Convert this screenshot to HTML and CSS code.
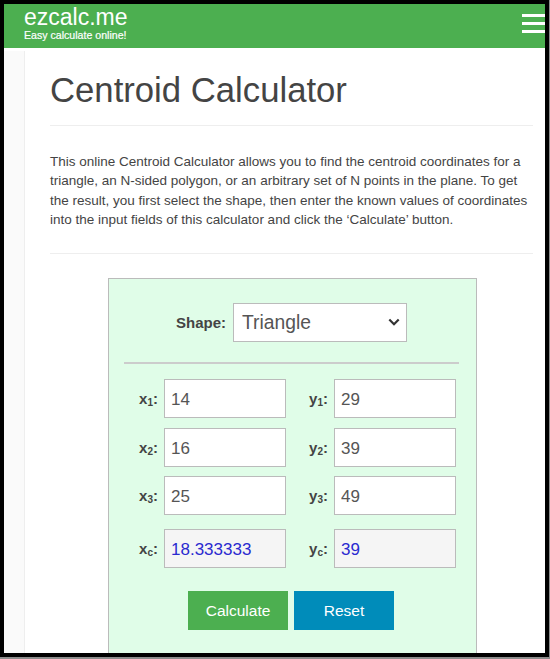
FILE: index.html
```html
<!DOCTYPE html>
<html lang="en">
<head>
<meta charset="utf-8">
<title>Centroid Calculator</title>
<link rel="stylesheet" href="styles.css">
</head>
<body>
<div class="frame">
  <header class="topbar">
    <div class="brand">
      <div class="brand-name">ezcalc.me</div>
      <div class="brand-tag">Easy calculate online!</div>
    </div>
    <div class="burger"><span></span><span></span><span></span></div>
  </header>
  <div class="body">
    <aside class="rail"></aside>
    <main class="main">
      <h1 class="title">Centroid Calculator</h1>
      <hr class="rule">
      <p class="intro">This online Centroid Calculator allows you to find the centroid coordinates for a triangle, an N-sided polygon, or an arbitrary set of N points in the plane. To get the result, you first select the shape, then enter the known values of coordinates into the input fields of this calculator and click the ‘Calculate’ button.</p>
      <hr class="rule rule-low">
      <form class="calc">
        <div class="shape-row">
          <label class="shape-label" for="shape">Shape:</label>
          <div class="select-wrap">
            <select class="shape-select" id="shape"><option>Triangle</option></select>
            <svg class="chevron" width="12" height="8" viewBox="0 0 12 8" aria-hidden="true"><path d="M1.3 1.5 6 6.2 10.7 1.5" fill="none" stroke="#333" stroke-width="2.2"/></svg>
          </div>
        </div>
        <hr class="calc-rule">
        <div class="fields">
          <label class="lab">x<sub>1</sub>:</label><input class="field" value="14">
          <label class="lab">y<sub>1</sub>:</label><input class="field" value="29">
          <label class="lab">x<sub>2</sub>:</label><input class="field" value="16">
          <label class="lab">y<sub>2</sub>:</label><input class="field" value="39">
          <label class="lab">x<sub>3</sub>:</label><input class="field" value="25">
          <label class="lab">y<sub>3</sub>:</label><input class="field" value="49">
        </div>
        <div class="fields results">
          <label class="lab">x<sub>c</sub>:</label><input class="field result" value="18.333333" readonly>
          <label class="lab">y<sub>c</sub>:</label><input class="field result" value="39" readonly>
        </div>
        <div class="actions">
          <button class="btn btn-green" type="button">Calculate</button>
          <button class="btn btn-blue" type="button">Reset</button>
        </div>
      </form>
    </main>
  </div>
</div>
</body>
</html>
```
FILE: styles.css
```css
* { box-sizing: border-box; }
html, body { margin: 0; padding: 0; }
body {
  width: 550px;
  height: 659px;
  overflow: hidden;
  background: #8c8c8c;
  font-family: "Liberation Sans", Arial, sans-serif;
  color: #444;
}
.frame {
  width: 549px;
  height: 657px;
  border: 4px solid #000;
  background: #fff;
  overflow: hidden;
  display: flex;
  flex-direction: column;
}
.topbar {
  flex: none;
  height: 44px;
  background: #4caf50;
  display: flex;
  justify-content: space-between;
  padding-left: 20px;
  color: #fff;
}
.brand-name { font-size: 23px; line-height: 24px; margin-top: 1px; }
.brand-tag { font-size: 10.6px; line-height: 12px; -webkit-text-stroke: 0.2px #fff; }
.burger {
  width: 23px;
  padding-top: 10px;
  display: flex;
  flex-direction: column;
  gap: 5px;
}
.burger span { display: block; height: 3px; background: #fff; }
.body { flex: 1; display: flex; min-height: 0; }
.rail { flex: none; width: 21px; margin-top: 3px; background: #fafafa; border-right: 1px solid #eee; }
.main { flex: 1; padding: 0 12px 0 25px; min-width: 0; }
.title {
  margin: 22px 0 0;
  font-size: 34.7px;
  line-height: 41px;
  font-weight: 400;
  color: #444;
}
.rule { border: 0; border-top: 1px solid #eee; margin: 14px 0 0; }
.intro {
  margin: 26px 0 0;
  font-size: 13.5px;
  line-height: 19.3px;
  color: #444;
}
.rule-low { margin-top: 24px; }
.calc {
  width: 369px;
  margin: 24px 0 0 58px;
  height: 400px;
  background: #e0fde8;
  border: 1px solid #bbb;
  padding: 24px 17px 0 15px;
}
.shape-row { display: flex; justify-content: center; align-items: center; gap: 7px; }
.shape-label { font-size: 15px; font-weight: 700; color: #444; }
.select-wrap { position: relative; display: flex; }
.shape-select {
  appearance: none;
  width: 174px;
  height: 39px;
  background: #fff;
  border: 1px solid #bbb;
  border-radius: 0;
  font-family: inherit;
  font-size: 19.3px;
  color: #555;
  padding-left: 8px;
}
.chevron { position: absolute; right: 7px; top: 15px; pointer-events: none; }
.calc-rule { border: 0; border-top: 2px solid #ccc; margin: 20px 0 0; }
.fields {
  display: grid;
  grid-template-columns: 40px 122px 48px 122px;
  row-gap: 9.5px;
  align-items: center;
  margin-top: 15px;
}
.results { margin-top: 14px; }
.lab {
  font-size: 15px;
  font-weight: 700;
  color: #444;
  text-align: right;
  padding-right: 6px;
}
.lab sub { font-size: 10px; line-height: 0; vertical-align: -2px; }
.field {
  width: 122px;
  height: 39px;
  border: 1px solid #bbb;
  background: #fff;
  padding: 3px 6px 0;
  font-family: inherit;
  font-size: 17px;
  color: #555;
  outline: 0;
}
.result { background: #f5f5f5; color: #2a2ad0; }
.actions { display: flex; gap: 6px; margin-top: 23px; padding-left: 64px; }
.btn {
  width: 100px;
  height: 39px;
  border: 0;
  color: #fff;
  font-family: inherit;
  font-size: 15.5px;
  padding: 0;
}
.btn-green { background: #4caf50; }
.btn-blue { background: #008cba; }
```
